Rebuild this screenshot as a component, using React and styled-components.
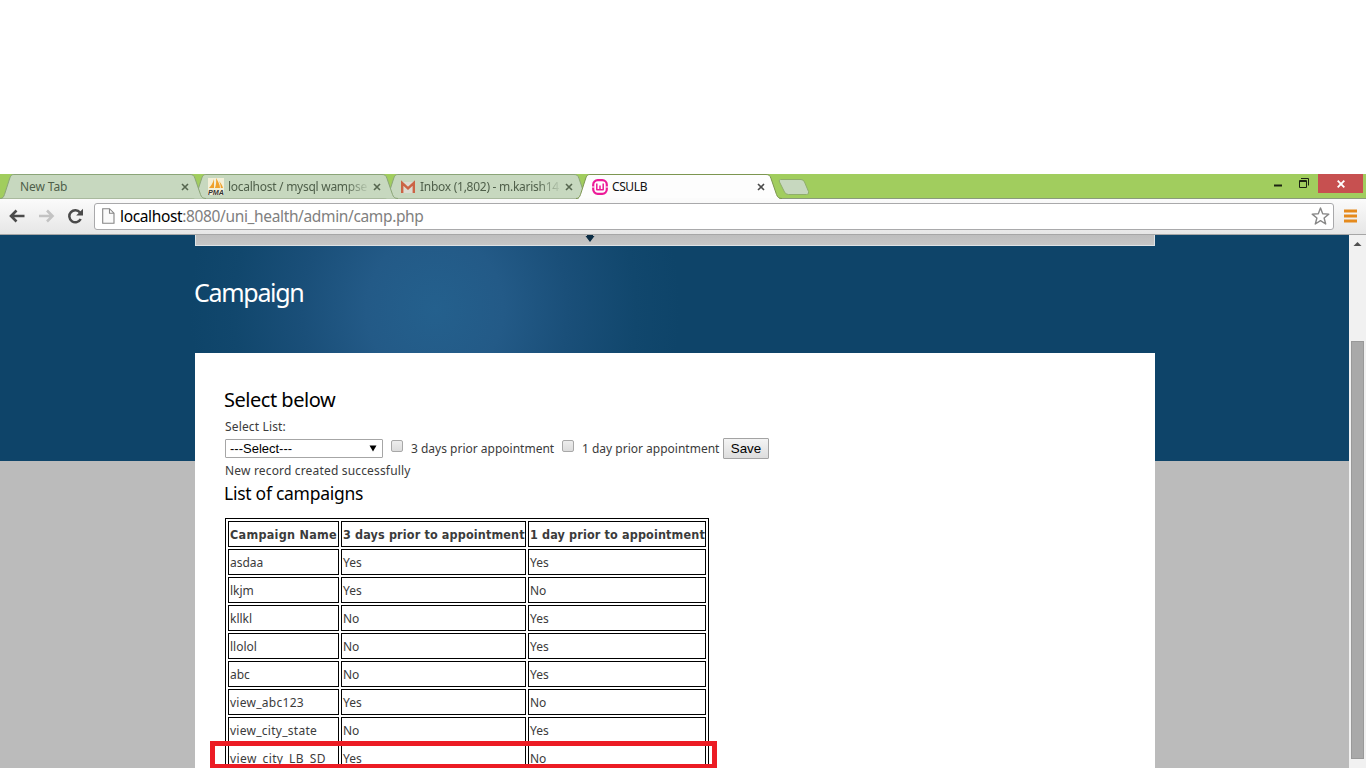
import React from 'react';
import styled, { createGlobalStyle } from 'styled-components';

const Global = createGlobalStyle`
  * { box-sizing: border-box; }
  body { margin: 0; background: #fff; overflow: hidden; }
`;

const ui = "'Noto Sans', 'Open Sans', sans-serif";
const tahoma = "'Noto Sans', 'DejaVu Sans Condensed', sans-serif";
const tahomaBold = "'DejaVu Sans Condensed', 'DejaVu Sans', sans-serif";

const Screen = styled.div`
  width: 1366px;
  height: 768px;
  padding-top: 174px;
  display: flex;
  flex-direction: column;
  overflow: hidden;
  background: #fff;
`;

const TabStrip = styled.div`
  position: relative;
  height: 25px;
  flex: none;
  display: flex;
  background: #a1cd5e;
  border-bottom: 1px solid #8a9a7c;
`;

const TabBox = styled.div`
  position: relative;
  width: 206px;
  height: 25px;
  margin-right: -14px;
  flex: none;
  display: flex;
  align-items: center;
  padding: 0 17px 0 ${p => (p.$icon ? 16 : 20)}px;
  z-index: ${p => p.$layer};
`;

const TabShape = styled.svg`
  position: absolute;
  left: 0;
  top: 0;
  z-index: -1;
`;

const TabLabel = styled.span`
  flex: 1;
  min-width: 0;
  margin-left: ${p => (p.$icon ? 4 : 0)}px;
  font: 12px/24px ${ui};
  letter-spacing: ${p => p.$ls || 0}px;
  white-space: nowrap;
  color: ${p => (p.$active ? '#111' : '#4f5f4a')};
  mask-image: ${p => (p.$fade ? 'linear-gradient(90deg, #000 118px, transparent 142px)' : 'none')};
`;

const TabClose = styled.svg`
  flex: none;
  margin-left: 6px;
`;

const NewTab = styled.svg`
  flex: none;
  margin-left: 9px;
`;

const WindowControls = styled.div`
  margin-left: auto;
  margin-right: 3px;
  display: flex;
`;

const CloseWindow = styled.div`
  width: 45px;
  height: 19px;
  background: #c75050;
  display: flex;
  align-items: center;
  justify-content: center;
`;

const Toolbar = styled.div`
  height: 36px;
  flex: none;
  display: flex;
  align-items: center;
  padding: 0 8px 1px;
  background: linear-gradient(#fbfbfb, #e6e6e6);
  border-bottom: 1px solid #a6a6a6;
`;

const NavIcon = styled.svg`
  flex: none;
  margin-right: ${p => p.$gap}px;
`;

const Omnibox = styled.div`
  width: 1240px;
  height: 27px;
  display: flex;
  align-items: center;
  padding: 0 3px 0 7px;
  background: #fff;
  border: 1px solid #a9a9ab;
  border-radius: 3px;
`;

const Url = styled.span`
  flex: 1;
  margin-left: 5px;
  font: 15.5px/24px ${ui};
  letter-spacing: ${p => p.$ls}px;
  color: #808080;
`;

const Host = styled.span`
  color: #000;
`;

const Viewport = styled.div`
  flex: 1;
  min-height: 0;
  display: flex;
`;

const Page = styled.div`
  flex: 1;
  min-width: 0;
  padding-left: 195px;
  overflow: hidden;
  background:
    radial-gradient(ellipse 245px 260px at 435px 74px, #24608d 0%, #235a87 28%, #1a4f79 54%, #11476d 82%, #0e4469 100%) 0 0 / 100% 226px no-repeat,
    #bbb;
`;

const MenuBar = styled.div`
  width: 960px;
  height: 11px;
  display: flex;
  background: linear-gradient(#bdbdbd, #c6c6c6);
  border: solid #dfe3e6;
  border-width: 0 1px 1px;
`;

const MenuArrow = styled.svg`
  margin-left: 389px;
`;

const Title = styled.h1`
  margin: 0 0 0 -1px;
  height: 107px;
  padding-top: 28px;
  font: 400 25px/36px ${tahoma};
  letter-spacing: -1.3px;
  color: #fff;
`;

const Content = styled.main`
  width: 960px;
  height: 500px;
  padding: 34px 30px 0;
  background: #fff;
  font: 12px/22px ${tahoma};
  color: #3b3b3b;
`;

const Heading = styled.h2`
  margin: 0 0 0 -1px;
  height: ${p => p.$h}px;
  font: 400 ${p => p.$size}px/${p => p.$lh}px ${tahoma};
  letter-spacing: ${p => p.$ls}px;
  color: #000;
`;

const Line = styled.div`
  height: 22px;
  letter-spacing: ${p => p.$ls}px;
`;

const FormRow = styled.div`
  height: 22px;
  display: flex;
  align-items: center;
`;

const SelectBox = styled.div`
  width: 158px;
  height: 19px;
  display: flex;
  align-items: center;
  justify-content: space-between;
  margin-bottom: 1px;
  padding: 0 5px 0 4px;
  border: 1px solid #a6a6a6;
  border-radius: 1px;
  font: 13px/17px 'Liberation Sans', Arial, sans-serif;
  color: #000;
`;

const Check = styled.span`
  width: 12px;
  height: 12px;
  margin: 0 8px 6px 8px;
  border: 1px solid #a8a8a8;
  border-radius: 2px;
  background: linear-gradient(#ededed, #dcdcdc);
`;

const CheckText = styled.span`
  width: ${p => p.$w}px;
  white-space: nowrap;
`;

const SaveButton = styled.div`
  width: 46px;
  height: 21px;
  margin: 0 0 2px 4px;
  border: 1px solid #a3a3a3;
  border-radius: 1px;
  background: linear-gradient(#f4f4f4, #dddddd);
  font: 13.33px/19px 'Liberation Sans', Arial, sans-serif;
  text-align: center;
  color: #000;
`;

const Table = styled.div`
  width: 484px;
  padding: 2px;
  display: grid;
  grid-template-columns: 111px 185px 178px;
  grid-auto-rows: 26px;
  gap: 2px;
  border: 1px solid #000;
`;

const Cell = styled.div`
  border: 1px solid #000;
  padding-left: 1px;
  line-height: 25px;
  letter-spacing: ${p => p.$ls || 0}px;
  white-space: nowrap;
`;

const HeadCell = styled(Cell)`
  font-family: ${tahomaBold};
  font-size: 12.5px;
  font-weight: 700;
  line-height: 26px;
`;

const Highlight = styled.div`
  position: absolute;
  left: 210px;
  top: 741px;
  width: 507px;
  height: 27px;
  border: 5px solid #ec1c24;
  border-bottom-width: 4px;
`;

const Scrollbar = styled.div`
  width: 17px;
  flex: none;
  display: flex;
  flex-direction: column;
  align-items: center;
  background: #f1f1f1;
`;

const Thumb = styled.div`
  width: 13px;
  height: 418px;
  margin-top: 89px;
  background: #a9a9a9;
  border: 1px solid #999;
`;

function Tab({ label, icon, active, fade, ls, layer }) {
  return (
    <TabBox $layer={layer} $icon={!!icon}>
      <TabShape width="206" height="26" viewBox="0 0 206 26">
        <path
          d="M0 24.5C3 24.5 3.5 23 4.500 20.500L9.500 5C10.700 1.500 11.500.5 14 .5H190C193 .5 194 1.500 195 4.500L200.500 20.500C201.500 23 202.500 24.500 206 24.500"
          fill={active ? '#fdfdfd' : '#c7d8bf'}
          stroke={active ? '#7c9650' : '#8ba578'}
        />
        {active && <path d="M3 24.500H203" stroke="#fbfbfb" />}
      </TabShape>
      {icon}
      <TabLabel $active={active} $icon={!!icon} $fade={fade} $ls={ls}>{label}</TabLabel>
      <TabClose width="8" height="8" viewBox="0 0 8 8">
        <path d="M1 1L7 7M7 1L1 7" stroke={active ? '#4a4a4a' : '#56664f'} strokeWidth="1.600" />
      </TabClose>
    </TabBox>
  );
}

const PmaIcon = (
  <svg width="16" height="17" viewBox="0 0 16 17">
    <rect width="16" height="17" fill="#f3f0d8" />
    <path d="M6 1V10H1C3 8 5 5 6 1ZM8 0C10 3 12 7 12 10H7C8 7 8.500 4 8 0ZM11 3C13 5 14.500 8 15 10H12.800C12.800 7 12 5 11 3Z" fill="#f0a22c" />
    <text x="0" y="16.500" fontFamily="Liberation Sans, sans-serif" fontSize="7" fontWeight="700" fontStyle="italic" textLength="16" lengthAdjust="spacingAndGlyphs" fill="#333">PMA</text>
  </svg>
);

const GmailIcon = (
  <svg width="16" height="16" viewBox="0 0 16 16">
    <path d="M1 3H15V14H1Z" fill="#dcdcd2" />
    <path d="M2.200 14V4L8 9.300L13.800 4V14" fill="none" stroke="#cb6445" strokeWidth="2.400" />
  </svg>
);

const WampIcon = (
  <svg width="16" height="16" viewBox="0 0 16 16">
    <rect x="1.200" y="1.200" width="13.600" height="13.600" rx="4.500" fill="#fff" stroke="#ec1a98" strokeWidth="2.200" />
    <path d="M0 8H2.500M13.500 8H16" stroke="#fff" strokeWidth="1" />
    <path d="M4.800 4.500V10.700H11.200V4.500M8 6.500V10.700" fill="none" stroke="#ec1a98" strokeWidth="1.500" strokeLinejoin="round" />
  </svg>
);

const rows = [
  { name: 'asdaa', three: 'Yes', one: 'Yes' },
  { name: 'lkjm', three: 'Yes', one: 'No' },
  { name: 'kllkl', three: 'No', one: 'Yes' },
  { name: 'llolol', three: 'No', one: 'Yes' },
  { name: 'abc', three: 'No', one: 'Yes' },
  { name: 'view_abc123', three: 'Yes', one: 'No', ls: 0.27 },
  { name: 'view_city_state', three: 'No', one: 'Yes', ls: 0.27 },
  { name: 'view_city_LB_SD', three: 'Yes', one: 'No', ls: 0.4 },
];

export default function App() {
  return (
    <Screen>
      <Global />
      <TabStrip>
        <Tab layer={3} label="New Tab" ls={-0.1} />
        <Tab layer={2} label="localhost / mysql wampse" icon={PmaIcon} fade ls={-0.27} />
        <Tab layer={1} label="Inbox (1,802) - m.karish14" icon={GmailIcon} fade ls={-0.27} />
        <Tab layer={4} label="CSULB" icon={WampIcon} active ls={-0.4} />
        <NewTab width="34" height="24" viewBox="0 0 34 24">
          <path d="M3.500 5.500H24Q26.500 5.500 27.500 8L31.500 17.500Q32.500 20.500 29.500 20.500H11.500Q8.500 20.500 7.500 18L2.500 8Q1.500 5.500 3.500 5.500Z" fill="#c7d8bf" stroke="#8fae6b" />
        </NewTab>
        <WindowControls>
          <svg width="46" height="20" viewBox="0 0 46 20">
            <path d="M2 10.500H10V12.500H2Z" fill="#1c2312" />
            <path d="M27.500 6.500H34.500V13.500H27.500ZM27.500 7.500H34.500" fill="none" stroke="#1c2312" />
            <path d="M29 4.500H36.500V11.500" fill="none" stroke="#1c2312" />
          </svg>
          <CloseWindow>
            <svg width="8" height="8" viewBox="0 0 8 8"><path d="M.7 .7L7.300 7.300M7.300 .7L.7 7.300" stroke="#fff" strokeWidth="1.900" /></svg>
          </CloseWindow>
        </WindowControls>
      </TabStrip>
      <Toolbar>
        <NavIcon $gap={13} width="17" height="16" viewBox="0 0 17 16">
          <path d="M16.500 8H3M8.500 2.500L3 8L8.500 13.500" fill="none" stroke="#4a4a4a" strokeWidth="2.600" />
        </NavIcon>
        <NavIcon $gap={12} width="17" height="16" viewBox="0 0 17 16">
          <path d="M1 8H14.500M9 2.500L14.500 8L9 13.500" fill="none" stroke="#c3c3c3" strokeWidth="2.600" />
        </NavIcon>
        <NavIcon $gap={10} width="17" height="16" viewBox="0 0 17 16">
          <path d="M13.700 11A6 6 0 1 1 13 4.500" fill="none" stroke="#4a4a4a" strokeWidth="2.500" />
          <path d="M16 .8V7.500H9.200Z" fill="#4a4a4a" />
        </NavIcon>
        <Omnibox>
          <svg width="13" height="16" viewBox="0 0 13 16">
            <path d="M.7 .7H7.500L12 5.200V15.300H.7ZM7.500 .7V5.200H12" fill="#fafafa" stroke="#858585" strokeWidth="1.100" />
          </svg>
          <Url $ls={-0.36}><Host>localhost</Host>:8080/uni_health/admin/camp.php</Url>
          <svg width="19" height="18" viewBox="0 0 19 18">
            <path d="M9.500 1L11.700 6.700L17.800 7.100L13.100 11L14.700 17L9.500 13.600L4.300 17L5.900 11L1.200 7.100L7.300 6.700Z" fill="#fff" stroke="#888" strokeWidth="1.400" strokeLinejoin="round" />
          </svg>
        </Omnibox>
        <svg width="24" height="14" viewBox="0 0 24 14">
          <path d="M10 2H23M10 7H23M10 12H23" stroke="#e58a1c" strokeWidth="3" />
        </svg>
      </Toolbar>
      <Viewport>
        <Page>
          <MenuBar>
            <MenuArrow width="10" height="8" viewBox="0 0 10 8"><path d="M2 0H8V1H9.500L5 7L.5 1H2Z" fill="#0a2c44" /></MenuArrow>
          </MenuBar>
          <Title>Campaign</Title>
          <Content>
            <Heading $size={20} $lh={26} $h={29} $ls={-0.48}>Select below</Heading>
            <Line $ls={0.15}>Select List:</Line>
            <FormRow>
              <SelectBox>
                ---Select---
                <svg width="8" height="7" viewBox="0 0 8 7"><path d="M.5 .5H7.500L4 6.500Z" fill="#000" /></svg>
              </SelectBox>
              <Check />
              <CheckText $w={143}>3 days prior appointment</CheckText>
              <Check />
              <CheckText $w={137}>1 day prior appointment</CheckText>
              <SaveButton>Save</SaveButton>
            </FormRow>
            <Line $ls={0.17}>New record created successfully</Line>
            <Heading $size={17.5} $lh={22} $h={36} $ls={-0.27}>List of campaigns</Heading>
            <Table>
              <HeadCell $ls={0.28}>Campaign Name</HeadCell>
              <HeadCell $ls={0.14}>3 days prior to appointment</HeadCell>
              <HeadCell $ls={0.14}>1 day prior to appointment</HeadCell>
              {rows.map(r => (
                <React.Fragment key={r.name}>
                  <Cell $ls={r.ls}>{r.name}</Cell>
                  <Cell>{r.three}</Cell>
                  <Cell>{r.one}</Cell>
                </React.Fragment>
              ))}
            </Table>
          </Content>
        </Page>
        <Scrollbar>
          <svg width="17" height="17" viewBox="0 0 17 17"><path d="M4.500 11L8.500 7L12.500 11Z" fill="#505050" /></svg>
          <Thumb />
        </Scrollbar>
      </Viewport>
      <Highlight />
    </Screen>
  );
}
